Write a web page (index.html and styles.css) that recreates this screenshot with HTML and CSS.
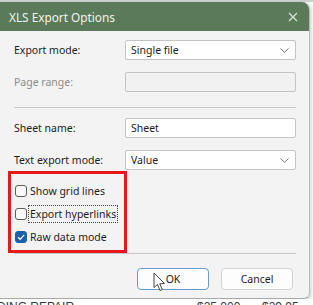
FILE: index.html
```html
<!DOCTYPE html>
<html lang="en">
<head>
  <meta charset="UTF-8" />
  <meta name="viewport" content="width=device-width, initial-scale=1" />
  <title>XLS Export Options</title>
  <link rel="stylesheet" href="styles.css">
</head>
<body>

<!-- sheet behind the dialog -->
<div class="sheet-top"></div>

<div class="dialog">
  <div class="titlebar">
    <span class="title">XLS Export Options</span>
    <svg class="close" width="10" height="10" viewBox="0 0 10 10">
      <path d="M1 1 L9 9 M9 1 L1 9" stroke="currentColor" stroke-width="1.3" fill="none" />
    </svg>
  </div>

  <div class="dialog-body">
    <div class="field-row">
      <label>Export mode:</label>
      <div class="select">
        <span>Single file</span>
        <svg class="chevron" width="9" height="5" viewBox="0 0 9 5">
          <path d="M0.5 0.5 L4.5 4.3 L8.5 0.5" stroke="currentColor" stroke-width="1" fill="none" />
        </svg>
      </div>
    </div>

    <div class="field-row disabled">
      <label>Page range:</label>
      <div class="input"></div>
    </div>

    <div class="sep"></div>

    <div class="field-row">
      <label>Sheet name:</label>
      <div class="input editable"><span>Sheet</span></div>
    </div>

    <div class="field-row">
      <label>Text export mode:</label>
      <div class="select">
        <span>Value</span>
        <svg class="chevron" width="9" height="5" viewBox="0 0 9 5">
          <path d="M0.5 0.5 L4.5 4.3 L8.5 0.5" stroke="currentColor" stroke-width="1" fill="none" />
        </svg>
      </div>
    </div>

    <!-- marked group -->
    <div class="highlight">
      <div class="check-row">
        <span class="box"></span>
        <span>Show grid lines</span>
      </div>
      <div class="check-row">
        <span class="box"></span>
        <span class="focused">Export hyperlinks</span>
      </div>
      <div class="check-row">
        <span class="box checked">
          <svg width="10" height="10" viewBox="0 0 10 10">
            <path d="M2 5.2 L4.2 7.3 L8.2 2.8" stroke="#fff" stroke-width="1.2" fill="none" />
          </svg>
        </span>
        <span>Raw data mode</span>
      </div>
    </div>

    <div class="sep sep-bottom"></div>

    <div class="buttons">
      <button class="btn default">
        OK
        <svg class="cursor" width="13" height="20" viewBox="0 0 13 20">
          <path d="M1 1 L1 15.5 L4.5 12.5 L7 18.5 L9.3 17.5 L6.8 11.8 L11.5 11.5 Z" fill="#fff" stroke="#444" stroke-width="1" stroke-linejoin="round" />
        </svg>
      </button>
      <button class="btn">Cancel</button>
    </div>
  </div>
</div>

<div class="sheet-row">
  <span class="cell-name">DING REPAIR</span>
  <span class="cell-a">$25.000</span>
  <span class="cell-b">$29.95</span>
</div>

</body>
</html>
```

FILE: styles.css
```css
:root {
  --title-bg: #5b7a59;
  --title-text: #eef3ed;
  --dialog-bg: #f3f3f3;
  --field-border: #c4c4c4;
  --text: #1c1c1c;
  --text-off: #8c8c8c;
  --mark: #e3191b;
  --check: #1d5fa9;
}

body {
  margin: 0;
  width: 313px;
  height: 305px;
  overflow: hidden;
  background: #f7f7f7;
  font-family: 'Noto Sans', 'Open Sans', sans-serif;
  font-size: 10.5px;
  color: var(--text);
}

.sheet-top {
  height: 2px;
  background: #cfcfcf;
}

.dialog {
  width: 309px;
  background: var(--dialog-bg);
  border-right: 1px solid #bcbcbc;
  border-bottom: 1px solid #a8a8a8;
  border-radius: 0 8px 6px 0;
  overflow: hidden;
  box-shadow: 1px 1px 3px rgba(0, 0, 0, 0.15);
}

.titlebar {
  height: 29px;
  display: flex;
  align-items: center;
  justify-content: space-between;
  padding: 0 11px 0 9px;
  background: var(--title-bg);
  color: var(--title-text);
}

.title {
  font-size: 11.8px;
}

.close {
  color: #d6e2d4;
}

.dialog-body {
  padding: 9px 13px 8px 14px;
}

.field-row {
  display: grid;
  grid-template-columns: 111px 171px;
  align-items: center;
  height: 20px;
}

.field-row + .field-row {
  margin-top: 12px;
}

.field-row.disabled label {
  color: var(--text-off);
}

.select, .input {
  height: 20px;
  box-sizing: border-box;
  display: flex;
  align-items: center;
  justify-content: space-between;
  padding: 0 6px 0 5px;
  border: 1px solid var(--field-border);
  border-radius: 2px;
  background: #fff;
}

.input {
  background: #f1f1f1;
}

.input.editable {
  background: #fff;
}

.chevron {
  color: #707070;
}

.sep {
  height: 1px;
  width: 282px;
  margin: 15px 0 10px;
  background: #c7c7c7;
}

.sep-bottom {
  margin: 0;
}

.highlight {
  width: 119px;
  box-sizing: border-box;
  margin: 1px 0 0 -6px;
  padding: 5px 0 2px 4px;
  border: 3px solid var(--mark);
}

.check-row {
  height: 23px;
  display: flex;
  align-items: center;
  gap: 3px;
}

.box {
  width: 12px;
  height: 12px;
  box-sizing: border-box;
  border: 1px solid #5c5c5c;
  border-radius: 3px;
  background: #fbfbfb;
  display: flex;
  align-items: center;
  justify-content: center;
}

.box.checked {
  border-color: var(--check);
  background: var(--check);
}

.focused {
  outline: 1px dotted #444;
  outline-offset: 1px;
}

.buttons {
  display: flex;
  justify-content: flex-end;
  gap: 12px;
  margin-top: 14px;
  padding-right: 3px;
}

.btn {
  position: relative;
  width: 72px;
  height: 22px;
  border: 1px solid #d2d2d2;
  border-radius: 4px;
  background: #fdfdfd;
  font-family: inherit;
  font-size: 10.5px;
  color: var(--text);
  padding: 0;
}

.btn.default {
  border: 1.5px solid #6b9bcb;
}

.cursor {
  position: absolute;
  left: 15px;
  top: 3px;
}

.sheet-row {
  display: flex;
  padding-top: 1px;
  font-family: 'Liberation Sans', Arial, sans-serif;
  font-size: 12px;
  color: #3a3a3a;
  background: #fff;
}

.cell-name {
  margin-left: -3px;
  width: 200px;
}

.cell-a {
  width: 65px;
}
```
